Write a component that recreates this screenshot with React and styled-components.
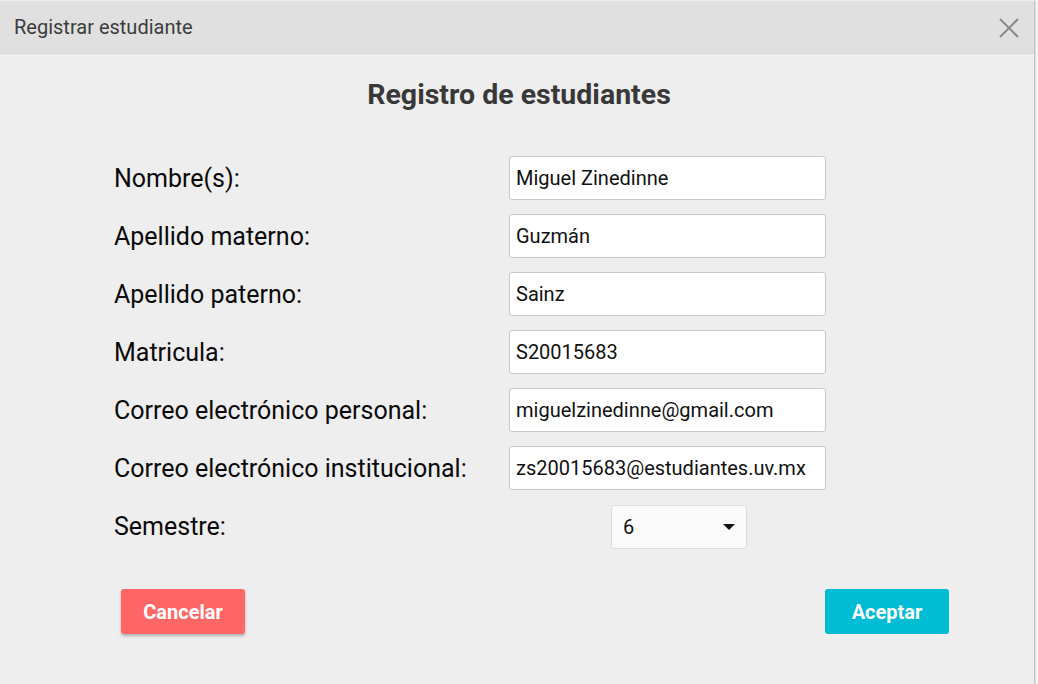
import React from 'react'
import styled, { createGlobalStyle } from 'styled-components'

const GlobalStyle = createGlobalStyle`
	html, body {
		margin: 0;
		padding: 0;
		background: #f7f7f7;
		font-family: Roboto, "Liberation Sans", Arial, sans-serif;
	}
`

const Window = styled.div`
	width: 1034px;
	height: 684px;
	background: #eeeeee;
	box-shadow: 1px 0 2px rgba(0, 0, 0, .3);
	display: flex;
	flex-direction: column;
	overflow: hidden;
`

const TitleBar = styled.div`
	height: 54px;
	flex-shrink: 0;
	background: #e0e0e0;
	border-top: 1px solid #ececec;
	border-bottom: 1px solid #d8d8d8;
	box-sizing: border-box;
	display: flex;
	align-items: center;
	justify-content: space-between;
	padding: 0 13px 0 14px;
`

const TitleText = styled.span`
	font-size: 20px;
	color: #3c3c3c;
`

const CloseButton = styled.button`
	border: none;
	background: none;
	padding: 0;
	margin-top: 2px;
	width: 24px;
	height: 24px;
	display: flex;
	align-items: center;
	justify-content: center;
	cursor: pointer;
`

const Heading = styled.h1`
	margin: 24px 0 0;
	padding-left: 4px;
	text-align: center;
	font-size: 28.5px;
	font-weight: 700;
	color: #383838;
	line-height: 34px;
`

const Form = styled.div`
	display: grid;
	grid-template-columns: 395px 317px;
	grid-auto-rows: 44px;
	row-gap: 14px;
	align-items: center;
	padding-left: 114px;
	margin-top: 44px;
`

const Label = styled.label`
	font-size: 25px;
	color: #0a0a0a;
`

const Input = styled.input`
	height: 44px;
	box-sizing: border-box;
	width: 100%;
	border: 1px solid #c8c8c8;
	border-radius: 3px;
	background: #fff;
	padding: 0 6px;
	font-family: Roboto, "Liberation Sans", Arial, sans-serif;
	font-size: 20px;
	color: #111;
	outline: none;
`

const SelectBox = styled.div`
	width: 136px;
	height: 44px;
	box-sizing: border-box;
	margin-left: 102px;
	margin-top: 2px;
	border: 1px solid #dcdcdc;
	border-radius: 3px;
	background: #fafafa;
	display: flex;
	align-items: center;
	justify-content: space-between;
	padding: 0 11px 0 11px;
	font-size: 20px;
	color: #111;
`

const Arrow = styled.span`
	width: 0;
	height: 0;
	border-left: 6px solid transparent;
	border-right: 6px solid transparent;
	border-top: 6px solid #111;
`

const Actions = styled.div`
	display: flex;
	justify-content: space-between;
	padding: 0 85px 0 121px;
	margin-top: 41px;
`

const Button = styled.button`
	width: 124px;
	height: 45px;
	border: none;
	border-radius: 3px;
	background: ${p => p.$danger ? '#ff6666' : '#00bcd4'};
	box-shadow: ${p => p.$danger ? '0 2px 3px rgba(0, 0, 0, .25)' : 'none'};
	color: #fff;
	font-family: Roboto, "Liberation Sans", Arial, sans-serif;
	font-size: 20px;
	font-weight: 700;
	cursor: pointer;
`

const fields = [
	['Nombre(s):', 'Miguel Zinedinne'],
	['Apellido materno:', 'Guzmán'],
	['Apellido paterno:', 'Sainz'],
	['Matricula:', 'S20015683'],
	['Correo electrónico personal:', 'miguelzinedinne@gmail.com'],
	['Correo electrónico institucional:', 'zs20015683@estudiantes.uv.mx']
]

export default function App() {
	return (
		<>
			<GlobalStyle />
			<Window>
				<TitleBar>
					<TitleText>Registrar estudiante</TitleText>
					<CloseButton aria-label='Cerrar'>
						<svg width='20' height='20' viewBox='0 0 20 20'>
							<path d='M1 1 L19 19 M19 1 L1 19' stroke='#8a8a8a' strokeWidth='2' />
						</svg>
					</CloseButton>
				</TitleBar>
				<Heading>Registro de estudiantes</Heading>
				<Form>
					{fields.map(([label, value]) => (
						<React.Fragment key={label}>
							<Label>{label}</Label>
							<Input defaultValue={value} />
						</React.Fragment>
					))}
					<Label>Semestre:</Label>
					<SelectBox>
						<span>6</span>
						<Arrow />
					</SelectBox>
				</Form>
				<Actions>
					<Button $danger>Cancelar</Button>
					<Button>Aceptar</Button>
				</Actions>
			</Window>
		</>
	)
}
